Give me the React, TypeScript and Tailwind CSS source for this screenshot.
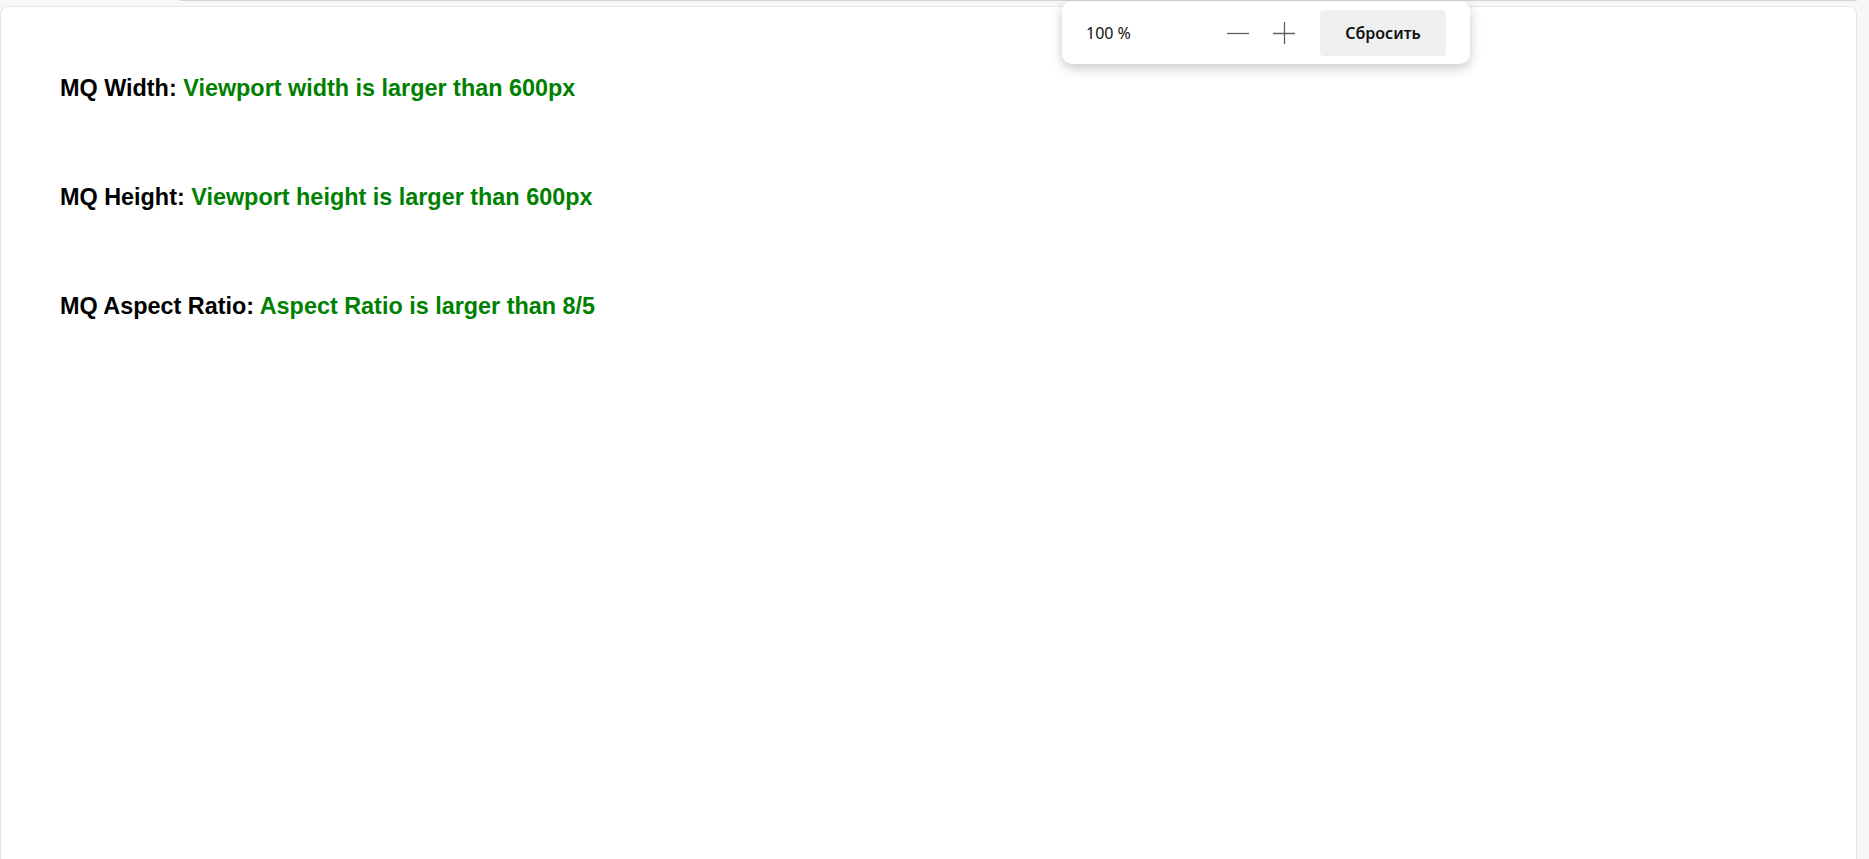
const rows = [
  { label: 'MQ Width:', value: 'Viewport width is larger than 600px' },
  { label: 'MQ Height:', value: 'Viewport height is larger than 600px' },
  { label: 'MQ Aspect Ratio:', value: 'Aspect Ratio is larger than 8/5' },
];

function ZoomPopup() {
  return (
    <div
      className="absolute left-[1062px] top-[1px] flex h-[63px] w-[408px] items-center rounded-[10px] bg-white px-[24px] shadow-[0_4px_12px_rgba(0,0,0,0.22)]"
      style={{ fontFamily: '"Noto Sans", "Open Sans", sans-serif' }}
    >
      <span className="w-[141px] text-[16px] text-[#111]">100 %</span>
      {/* minus */}
      <svg width="22" height="22" viewBox="0 0 22 22" className="text-[#5f5f5f]">
        <path d="M0 11.5h22" stroke="currentColor" strokeWidth="1.3" />
      </svg>
      {/* plus */}
      <svg width="22" height="22" viewBox="0 0 22 22" className="ml-[24px] text-[#5f5f5f]">
        <path d="M0 11.5h22M11.5 0v22" stroke="currentColor" strokeWidth="1.3" />
      </svg>
      <button className="ml-[25px] flex h-[46px] w-[126px] items-center justify-center rounded-[4px] bg-[#efefef] text-[16px] font-semibold text-[#111]">
        Сбросить
      </button>
    </div>
  );
}

export default function App() {
  return (
    <div className="relative flex h-[859px] w-full flex-col overflow-hidden bg-[#f7f7f7]">
      <div className="h-[6px] shrink-0">
        <div className="ml-[180px] mr-[12px] h-px bg-[#d4d4d4]" />
      </div>
      <div
        className="mr-[12px] flex-1 rounded-t-[8px] border border-b-0 border-[#e6e6e6] bg-white pl-[59px] pt-[68px]"
        style={{ fontFamily: '"Liberation Sans", Arial, sans-serif' }}
      >
        <div className="flex flex-col gap-[82px]">
          {rows.map((row) => (
            <p key={row.label} className="text-[23.4px] font-bold leading-[27px] text-black">
              {row.label} <span className="text-[#008000]">{row.value}</span>
            </p>
          ))}
        </div>
      </div>
      <ZoomPopup />
    </div>
  );
}
